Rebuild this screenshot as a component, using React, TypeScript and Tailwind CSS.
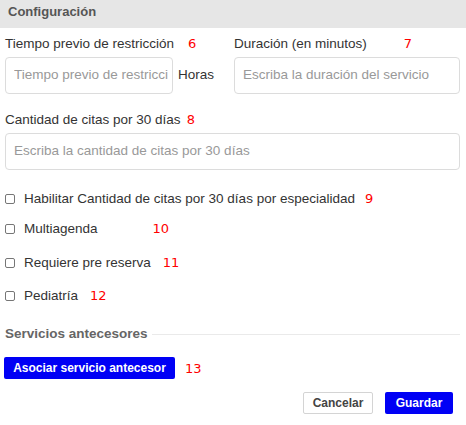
import React from 'react';

const Num = ({ children, className = '' }: { children: React.ReactNode; className?: string }) => (
  <span className={`text-[13px] text-[#ff0000] font-['DejaVu_Sans',sans-serif] ${className}`}>{children}</span>
);

const Check = ({ label, num, numClass, className = '' }: { label: string; num: string; numClass: string; className?: string }) => (
  <label className={`flex items-center h-[20px] ${className}`}>
    <span className="w-[10px] h-[10px] border border-[#767676] rounded-[2px] bg-white shrink-0" />
    <span className="ml-[9px] text-[13.5px] text-[#333]">{label}</span>
    <Num className={numClass}>{num}</Num>
  </label>
);

export default function App() {
  return (
    <div className="w-[466px] h-[425px] bg-white font-['Liberation_Sans',Arial,sans-serif] text-[#333]">
      <div className="h-[28px] bg-[#e6e6e6] px-[8px] pb-[4px] flex items-center">
        <span className="text-[13px] font-bold text-[#555]">Configuración</span>
      </div>

      <div className="px-[5px] pr-[6px]">
        <div className="flex mt-[8px]">
          <div className="w-[229px]">
            <div className="flex items-center h-[16px] text-[13.5px]">
              Tiempo previo de restricción
              <Num className="ml-[14px]">6</Num>
            </div>
            <div className="flex items-center mt-[5px]">
              <div className="w-[168px] h-[37px] border border-[#dcdcdc] rounded-[4px] pl-[8px] pr-[4px] flex items-center">
                <span className="block w-full overflow-hidden whitespace-nowrap text-[13.5px] text-[#999]">
                  Tiempo previo de restricci
                </span>
              </div>
              <span className="ml-[5px] text-[13.5px] text-[#333]">Horas</span>
            </div>
          </div>
          <div className="flex-1">
            <div className="flex items-center h-[16px] text-[13.5px]">
              Duración (en minutos)
              <Num className="ml-[37px]">7</Num>
            </div>
            <div className="mt-[5px] h-[37px] border border-[#dcdcdc] rounded-[4px] px-[8px] flex items-center text-[13.5px] text-[#999]">
              Escriba la duración del servicio
            </div>
          </div>
        </div>

        <div className="mt-[18px] flex items-center h-[16px] text-[13.5px]">
          Cantidad de citas por 30 días
          <Num className="ml-[6px]">8</Num>
        </div>
        <div className="mt-[5px] h-[37px] border border-[#dcdcdc] rounded-[4px] px-[8px] flex items-center text-[13.5px] text-[#999]">
          Escriba la cantidad de citas por 30 días
        </div>

        <div className="mt-[15px] flex flex-col">
          <Check className="mt-[4px]" label="Habilitar Cantidad de citas por 30 días por especialidad" num="9" numClass="ml-[10px]" />
          <Check className="mt-[10px]" label="Multiagenda" num="10" numClass="ml-[55px]" />
          <Check className="mt-[14px]" label="Requiere pre reserva" num="11" numClass="ml-[12px]" />
          <Check className="mt-[13px]" label="Pediatría" num="12" numClass="ml-[12px]" />
        </div>

        <div className="mt-[18px] flex items-center">
          <span className="text-[13.5px] font-bold text-[#666]">Servicios antecesores</span>
          <div className="flex-1 h-px bg-[#eaeaea] ml-[4px]" />
        </div>

        <div className="mt-[13px] flex items-center">
          <button className="-ml-[1px] w-[171px] h-[22px] bg-[#0000f5] text-white text-[12px] font-bold rounded-[2px]">
            Asociar servicio antecesor
          </button>
          <Num className="ml-[10px]">13</Num>
        </div>

        <div className="mt-[13px] flex justify-end pr-[7px] gap-[12px]">
          <button className="w-[70px] h-[22px] border border-[#d4d4d4] bg-white text-[#444] text-[12px] font-bold rounded-[2px]">
            Cancelar
          </button>
          <button className="w-[68px] h-[22px] bg-[#0000f5] text-white text-[12px] font-bold rounded-[2px]">
            Guardar
          </button>
        </div>
      </div>
    </div>
  );
}
